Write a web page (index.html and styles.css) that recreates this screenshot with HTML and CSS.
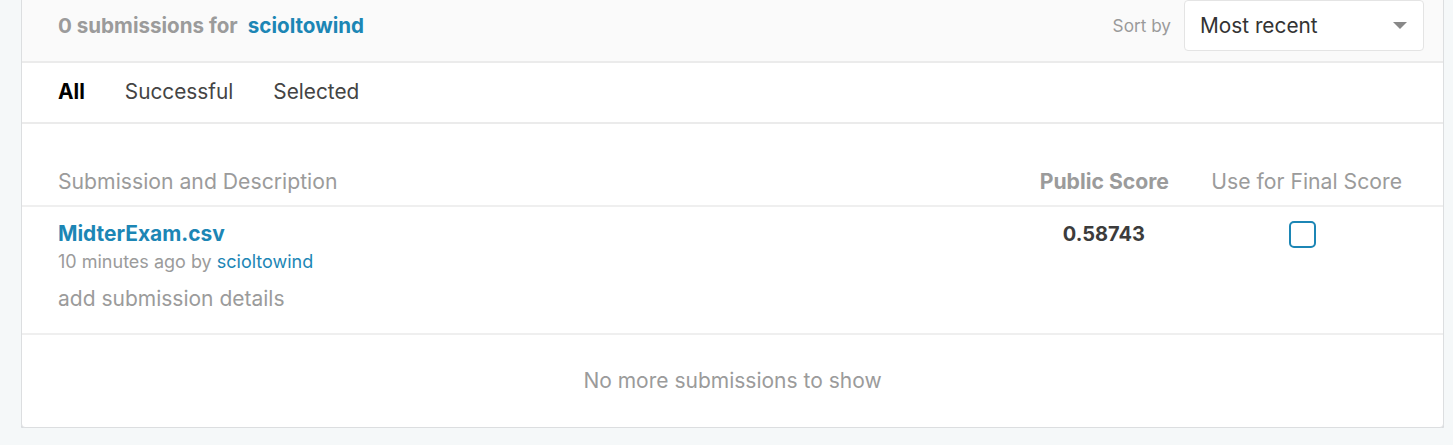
FILE: index.html
```html
<!DOCTYPE html>
<html>
<head>
<meta charset="utf-8">
<link rel="stylesheet" href="styles.css">
</head>
<body>
<div class="card">
  <div class="card-head">
    <div class="title"><span class="count">0 submissions for</span><a class="user">scioltowind</a></div>
    <div class="sort">
      <span class="sort-label">Sort by</span>
      <div class="select">
        <span>Most recent</span>
        <span class="caret"></span>
      </div>
    </div>
  </div>
  <div class="tabs">
    <span class="tab active">All</span>
    <span class="tab">Successful</span>
    <span class="tab">Selected</span>
  </div>
  <div class="table">
    <div class="row head">
      <div class="c-desc">Submission and Description</div>
      <div class="c-score">Public Score</div>
      <div class="c-use">Use for Final Score</div>
    </div>
    <div class="row item">
      <div class="c-desc">
        <a class="file">MidterExam.csv</a>
        <div class="meta">10 minutes ago by <a class="meta-user">scioltowind</a></div>
        <div class="details">add submission details</div>
      </div>
      <div class="c-score score">0.58743</div>
      <div class="c-use"><span class="checkbox"></span></div>
    </div>
  </div>
  <div class="footer">No more submissions to show</div>
</div>
</body>
</html>
```

FILE: styles.css
```css
html, body {
  margin: 0;
  padding: 0;
  background: #f5f8f9;
  font-family: "Inter", "Liberation Sans", sans-serif;
}
.card {
  margin: -15px 0 0 21px;
  width: 1421px;
  background: #fff;
  border: 1px solid #dcdee0;
  border-radius: 4px;
  box-shadow: 0 2px 0 #d9dcdf;
}
.card-head {
  height: 77px;
  box-sizing: border-box;
  background: #fafafa;
  border-bottom: 2px solid #ebebeb;
  display: flex;
  align-items: center;
  justify-content: space-between;
  padding: 4px 19px 0 36px;
}
.title {
  font-size: 20.6px;
  font-weight: 700;
  display: flex;
  gap: 10px;
}
.count { color: #9b9b9b; }
.user { color: #1c86b5; }
.sort {
  display: flex;
  align-items: center;
  gap: 13px;
}
.sort-label {
  color: #9a9a9a;
  font-size: 17.2px;
}
.select {
  width: 240px;
  height: 51px;
  box-sizing: border-box;
  border: 1px solid #e4e4e4;
  border-radius: 4px;
  background: #fff;
  display: flex;
  align-items: center;
  justify-content: space-between;
  padding: 0 16px 0 15px;
  font-size: 20.8px;
  color: #333;
}
.caret {
  width: 0;
  height: 0;
  border-left: 7px solid transparent;
  border-right: 7px solid transparent;
  border-top: 7px solid #888;
}
.tabs {
  height: 61px;
  box-sizing: border-box;
  border-bottom: 2px solid #ebebeb;
  display: flex;
  align-items: center;
  gap: 40px;
  padding: 0 0 2px 36px;
  font-size: 20.8px;
  color: #444;
}
.tab.active {
  color: #000;
  font-weight: 700;
}
.table {
  padding-top: 34px;
}
.row {
  display: grid;
  grid-template-columns: 1fr 190px 233px;
  padding: 0 41px 0 36px;
  border-bottom: 2px solid #efefef;
}
.row.head {
  height: 49px;
  box-sizing: border-box;
  align-items: center;
  padding-bottom: 1px;
  font-size: 21.2px;
  color: #9b9b9b;
}
.c-score {
  text-align: right;
}
.head .c-score {
  font-weight: 700;
}
.c-use {
  text-align: right;
}
.row.item {
  height: 128px;
  box-sizing: border-box;
  padding-top: 13px;
  align-items: start;
}
.file {
  display: block;
  color: #1c86b5;
  font-weight: 700;
  font-size: 20.9px;
  line-height: 28px;
}
.meta {
  font-size: 18px;
  color: #9b9b9b;
  line-height: 28px;
}
.meta-user { color: #1c86b5; }
.details {
  font-size: 21px;
  color: #9b9b9b;
  margin-top: 9px;
  line-height: 28px;
}
.score {
  font-size: 20px;
  font-weight: 700;
  color: #3c3c3c;
  line-height: 28px;
  padding-right: 24px;
}
.item .c-use {
  display: flex;
  justify-content: flex-end;
  padding-right: 86px;
  padding-top: 1px;
}
.checkbox {
  display: block;
  width: 27px;
  height: 27px;
  box-sizing: border-box;
  border: 2px solid #1c86b5;
  border-radius: 5px;
}
.footer {
  height: 92px;
  box-sizing: border-box;
  padding-bottom: 2px;
  display: flex;
  align-items: center;
  justify-content: center;
  font-size: 21px;
  color: #9b9b9b;
}
```
